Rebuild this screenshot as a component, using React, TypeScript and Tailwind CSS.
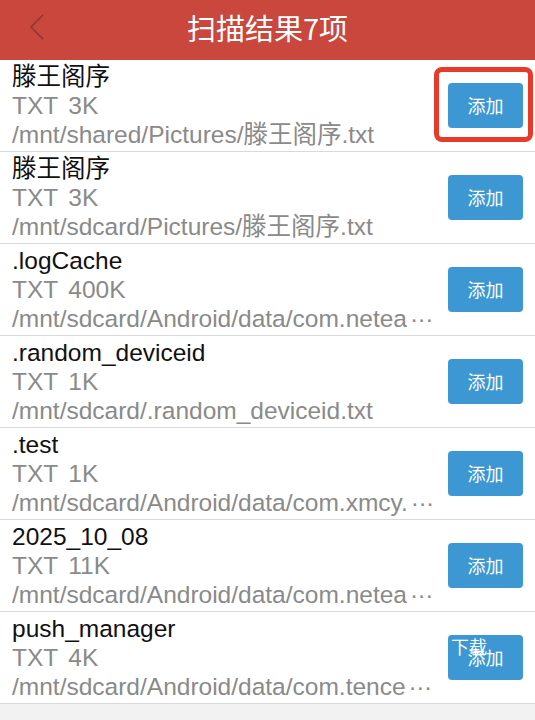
import React from "react";

type Item = { name: string; type: string; size: string; path: string; ell?: boolean };

const items: Item[] = [
  { name: "滕王阁序", type: "TXT", size: "3K", path: "/mnt/shared/Pictures/滕王阁序.txt" },
  { name: "滕王阁序", type: "TXT", size: "3K", path: "/mnt/sdcard/Pictures/滕王阁序.txt" },
  { name: ".logCache", type: "TXT", size: "400K", path: "/mnt/sdcard/Android/data/com.netea", ell: true },
  { name: ".random_deviceid", type: "TXT", size: "1K", path: "/mnt/sdcard/.random_deviceid.txt" },
  { name: ".test", type: "TXT", size: "1K", path: "/mnt/sdcard/Android/data/com.xmcy.", ell: true },
  { name: "2025_10_08", type: "TXT", size: "11K", path: "/mnt/sdcard/Android/data/com.netea", ell: true },
  { name: "push_manager", type: "TXT", size: "4K", path: "/mnt/sdcard/Android/data/com.tence", ell: true },
];

const font = { fontFamily: '"Liberation Sans", "Noto Sans CJK SC", sans-serif' };
const cjk = { fontFamily: '"Noto Sans CJK SC", sans-serif' };

export default function App() {
  return (
    <div className="w-[535px] h-[720px] bg-[#f2f2f2] overflow-hidden" style={font}>
      <div className="h-[60px] bg-[#c9473d] flex items-center justify-center relative pb-[6px]">
        <svg className="absolute left-[28px] top-[13px]" width="18" height="28" viewBox="0 0 18 28">
          <polyline points="15,2 3,14 15,26" fill="none" stroke="#8e3832" strokeWidth="1.6" />
        </svg>
        <span className="text-white text-[29px] leading-none" style={cjk}>
          扫描结果7项
        </span>
      </div>
      <div className="bg-white">
        {items.map((it, i) => (
          <div key={i} className="h-[92px] border-b border-[#d9d9d9] flex items-center pl-[12px] pr-[12px]">
            <div className="flex-1 min-w-0 text-[24.5px] leading-[29px] pt-[1px] pb-[2px]">
              <div className="text-[#111] whitespace-nowrap">{it.name}</div>
              <div className="text-[#8a8a8a] whitespace-nowrap">
                {it.type}
                <span className="ml-[10px]">{it.size}</span>
              </div>
              <div className="text-[#8a8a8a] whitespace-nowrap overflow-hidden">
                {it.path}
                {it.ell && <span className="ml-[3px] tracking-[-0.5px]">···</span>}
              </div>
            </div>
            <div className="relative shrink-0 ml-[8px]">
              <div className="w-[75px] h-[45px] bg-[#3d97d2] rounded-[4px] flex items-center justify-center text-white text-[18px]" style={cjk}>
                添加
              </div>
              {i === 0 && (
                <div className="absolute -left-[14px] -right-[10px] -top-[16px] -bottom-[14px] border-[5px] border-[#e63b2a] rounded-[8px]" />
              )}
              {i === items.length - 1 && (
                <div className="absolute left-[3px] top-[1px] text-white text-[18px] leading-[20px]" style={cjk}>
                  下载
                </div>
              )}
            </div>
          </div>
        ))}
      </div>
    </div>
  );
}
